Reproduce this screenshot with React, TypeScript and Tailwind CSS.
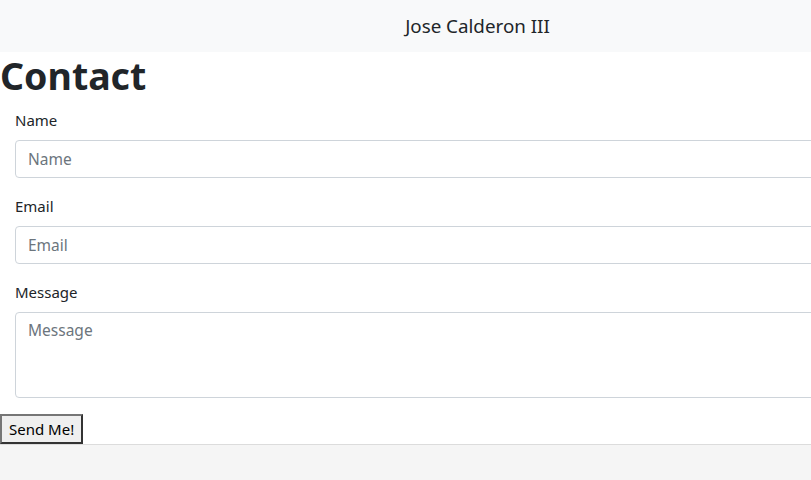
import React from "react";

export default function App() {
  const font = { fontFamily: '"Noto Sans", "Open Sans", sans-serif' };
  return (
    <div className="w-[811px] h-[480px] overflow-hidden bg-[#f5f5f5] text-[#212529]" style={font}>
      <div className="bg-white">
        <header className="h-[52px] bg-[#f8f9fa] flex items-center justify-center pl-[144px]">
          <span className="text-[18.8px] leading-[30px] text-[#212529]">Jose Calderon III</span>
        </header>
        <h1 className="text-[37.5px] font-bold leading-[48px] mb-2 text-[#212529]">Contact</h1>
        <form className="pl-[15px]">
          <div className="mb-4">
            <label className="block text-[15px] leading-6 mb-2">Name</label>
            <input
              className="block w-[820px] h-[38px] border border-[#ced4da] rounded-[4px] px-3 text-[15.5px] placeholder:text-[#6c757d] bg-white"
              placeholder="Name"
            />
          </div>
          <div className="mb-4">
            <label className="block text-[15px] leading-6 mb-2">Email</label>
            <input
              className="block w-[820px] h-[38px] border border-[#ced4da] rounded-[4px] px-3 text-[15.5px] placeholder:text-[#6c757d] bg-white"
              placeholder="Email"
            />
          </div>
          <div className="mb-4">
            <label className="block text-[15px] leading-6 mb-2">Message</label>
            <textarea
              className="block w-[820px] h-[86px] border border-[#ced4da] rounded-[4px] px-3 py-[6px] text-[15.5px] placeholder:text-[#6c757d] bg-white resize-none"
              placeholder="Message"
            />
          </div>
        </form>
        <div className="flex">
          <button className="h-[30px] px-[7px] bg-[#efefef] border-2 border-[#333] border-t-[#767676] border-l-[#767676] text-[15px] leading-none text-black">
            Send Me!
          </button>
        </div>
      </div>
      <div className="border-t border-[#dcdcdc]" />
    </div>
  );
}
